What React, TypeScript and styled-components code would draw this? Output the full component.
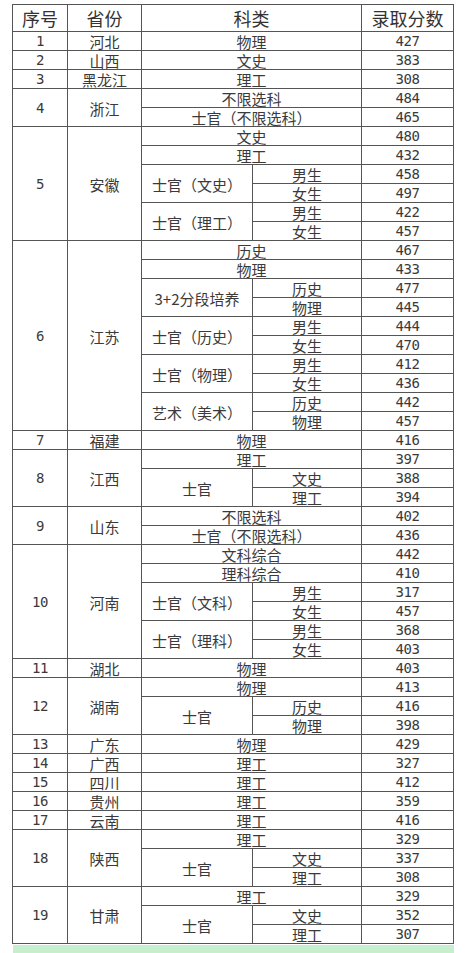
import React from 'react';
import styled, { createGlobalStyle } from 'styled-components';

const GlobalStyle = createGlobalStyle`
  html, body {
    margin: 0;
    padding: 0;
    background: #ffffff;
  }
  body {
    font-family: "Noto Sans CJK SC", "Noto Sans", sans-serif;
    color: #333333;
  }
`;

const Page = styled.div`
  padding: 4px 0 0 12px;
  width: 472px;
  box-sizing: border-box;
`;

const Table = styled.table`
  border-collapse: collapse;
  table-layout: fixed;
  width: 442px;
`;

const HeadCell = styled.th`
  height: 26px;
  padding: 0;
  border: 1px solid #555555;
  font-size: 18px;
  font-weight: 400;
  line-height: 24px;
  color: #333333;
  text-align: center;
`;

const Cell = styled.td<{ $num?: boolean }>`
  height: 17px;
  padding: 1px 0 0;
  border: 1px solid #555555;
  font-size: ${(p) => (p.$num ? '14px' : '15px')};
  line-height: 17px;
  color: #3a3a3a;
  text-align: center;
  vertical-align: middle;
  white-space: nowrap;
  overflow: hidden;
  font-family: ${(p) =>
    p.$num ? '"DejaVu Sans Mono", "Liberation Mono", monospace' : 'inherit'};
  letter-spacing: ${(p) => (p.$num ? '-0.5px' : '0')};
`;

const Footer = styled.div`
  margin: 1px 0 0 1px;
  width: 441px;
  height: 10px;
  background: #c6efce;
`;

type Leaf = { label: string; score: number };
type Item = { label: string; score?: number; subs?: Leaf[] };
type Group = { no: number; prov: string; items: Item[] };

const data: Group[] = [
  { no: 1, prov: '河北', items: [{ label: '物理', score: 427 }] },
  { no: 2, prov: '山西', items: [{ label: '文史', score: 383 }] },
  { no: 3, prov: '黑龙江', items: [{ label: '理工', score: 308 }] },
  {
    no: 4,
    prov: '浙江',
    items: [
      { label: '不限选科', score: 484 },
      { label: '士官（不限选科）', score: 465 },
    ],
  },
  {
    no: 5,
    prov: '安徽',
    items: [
      { label: '文史', score: 480 },
      { label: '理工', score: 432 },
      { label: '士官（文史）', subs: [{ label: '男生', score: 458 }, { label: '女生', score: 497 }] },
      { label: '士官（理工）', subs: [{ label: '男生', score: 422 }, { label: '女生', score: 457 }] },
    ],
  },
  {
    no: 6,
    prov: '江苏',
    items: [
      { label: '历史', score: 467 },
      { label: '物理', score: 433 },
      { label: '3+2分段培养', subs: [{ label: '历史', score: 477 }, { label: '物理', score: 445 }] },
      { label: '士官（历史）', subs: [{ label: '男生', score: 444 }, { label: '女生', score: 470 }] },
      { label: '士官（物理）', subs: [{ label: '男生', score: 412 }, { label: '女生', score: 436 }] },
      { label: '艺术（美术）', subs: [{ label: '历史', score: 442 }, { label: '物理', score: 457 }] },
    ],
  },
  { no: 7, prov: '福建', items: [{ label: '物理', score: 416 }] },
  {
    no: 8,
    prov: '江西',
    items: [
      { label: '理工', score: 397 },
      { label: '士官', subs: [{ label: '文史', score: 388 }, { label: '理工', score: 394 }] },
    ],
  },
  {
    no: 9,
    prov: '山东',
    items: [
      { label: '不限选科', score: 402 },
      { label: '士官（不限选科）', score: 436 },
    ],
  },
  {
    no: 10,
    prov: '河南',
    items: [
      { label: '文科综合', score: 442 },
      { label: '理科综合', score: 410 },
      { label: '士官（文科）', subs: [{ label: '男生', score: 317 }, { label: '女生', score: 457 }] },
      { label: '士官（理科）', subs: [{ label: '男生', score: 368 }, { label: '女生', score: 403 }] },
    ],
  },
  { no: 11, prov: '湖北', items: [{ label: '物理', score: 403 }] },
  {
    no: 12,
    prov: '湖南',
    items: [
      { label: '物理', score: 413 },
      { label: '士官', subs: [{ label: '历史', score: 416 }, { label: '物理', score: 398 }] },
    ],
  },
  { no: 13, prov: '广东', items: [{ label: '物理', score: 429 }] },
  { no: 14, prov: '广西', items: [{ label: '理工', score: 327 }] },
  { no: 15, prov: '四川', items: [{ label: '理工', score: 412 }] },
  { no: 16, prov: '贵州', items: [{ label: '理工', score: 359 }] },
  { no: 17, prov: '云南', items: [{ label: '理工', score: 416 }] },
  {
    no: 18,
    prov: '陕西',
    items: [
      { label: '理工', score: 329 },
      { label: '士官', subs: [{ label: '文史', score: 337 }, { label: '理工', score: 308 }] },
    ],
  },
  {
    no: 19,
    prov: '甘肃',
    items: [
      { label: '理工', score: 329 },
      { label: '士官', subs: [{ label: '文史', score: 352 }, { label: '理工', score: 307 }] },
    ],
  },
];

const countRows = (g: Group) =>
  g.items.reduce((n, it) => n + (it.subs ? it.subs.length : 1), 0);

const GroupRows: React.FC<{ group: Group }> = ({ group }) => {
  const span = countRows(group);
  const rows: React.ReactNode[] = [];
  let first = true;

  const lead = () => {
    if (!first) return null;
    first = false;
    return (
      <>
        <Cell $num rowSpan={span}>{group.no}</Cell>
        <Cell rowSpan={span}>{group.prov}</Cell>
      </>
    );
  };

  group.items.forEach((it, i) => {
    if (it.subs) {
      it.subs.forEach((s, j) => {
        rows.push(
          <tr key={`${i}-${j}`}>
            {lead()}
            {j === 0 && <Cell rowSpan={it.subs!.length}>{it.label}</Cell>}
            <Cell>{s.label}</Cell>
            <Cell $num>{s.score}</Cell>
          </tr>
        );
      });
    } else {
      rows.push(
        <tr key={i}>
          {lead()}
          <Cell colSpan={2}>{it.label}</Cell>
          <Cell $num>{it.score}</Cell>
        </tr>
      );
    }
  });

  return <>{rows}</>;
};

export default function App() {
  return (
    <Page>
      <GlobalStyle />
      <Table>
        <colgroup>
          <col style={{ width: 55 }} />
          <col style={{ width: 74 }} />
          <col style={{ width: 111 }} />
          <col style={{ width: 109 }} />
          <col style={{ width: 92 }} />
        </colgroup>
        <thead>
          <tr>
            <HeadCell>序号</HeadCell>
            <HeadCell>省份</HeadCell>
            <HeadCell colSpan={2}>科类</HeadCell>
            <HeadCell>录取分数</HeadCell>
          </tr>
        </thead>
        <tbody>
          {data.map((g) => (
            <GroupRows key={g.no} group={g} />
          ))}
        </tbody>
      </Table>
      <Footer />
    </Page>
  );
}
